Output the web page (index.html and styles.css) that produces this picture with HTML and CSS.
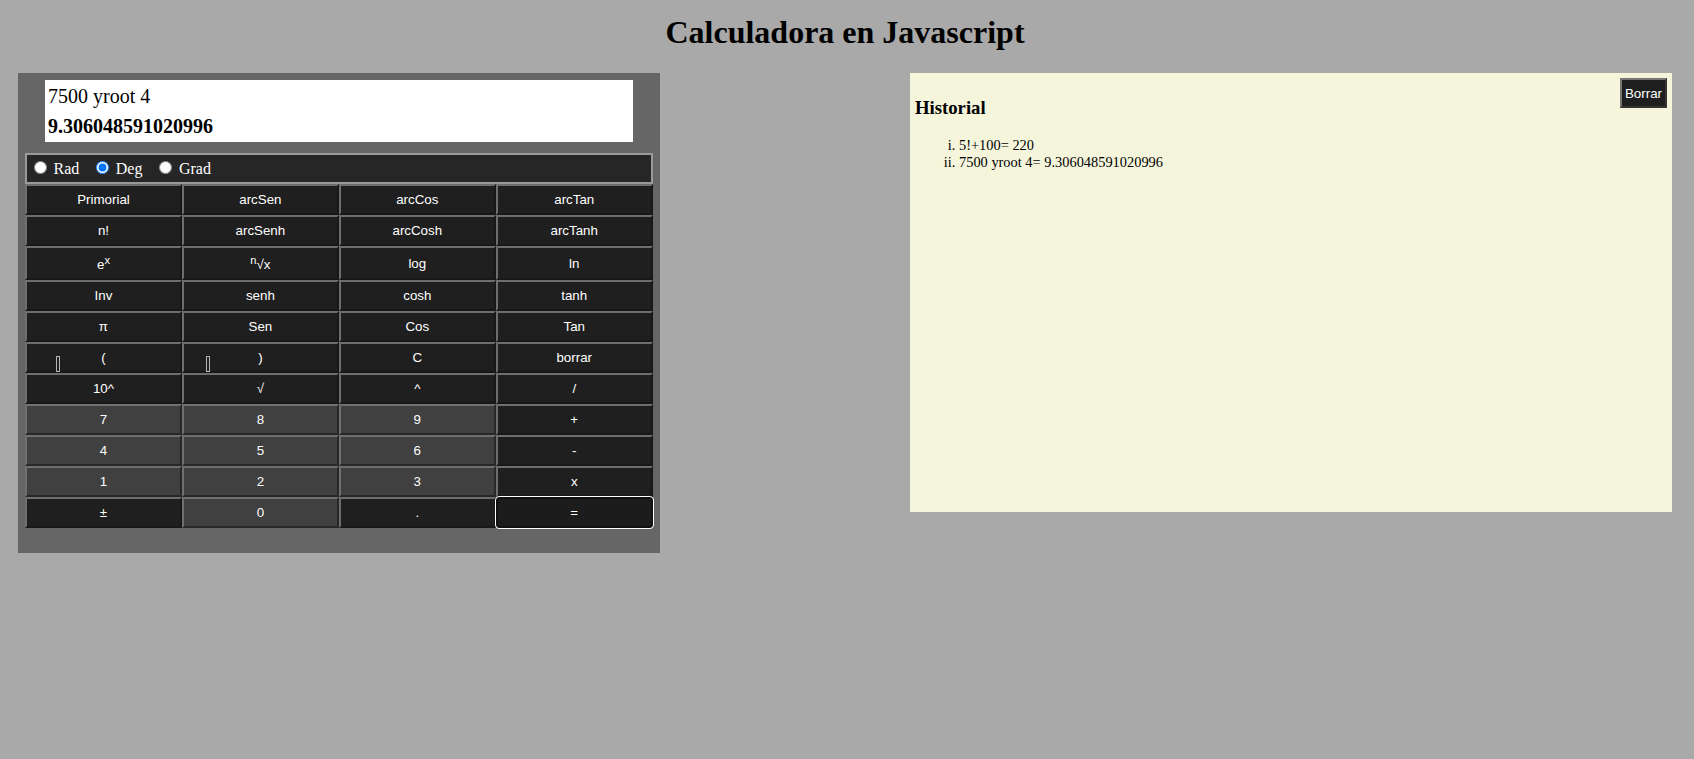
FILE: index.html
```html
<!DOCTYPE html>
<html lang="es">
<head>
<meta charset="utf-8">
<title>Calculadora en Javascript</title>
<link rel="stylesheet" href="styles.css">
</head>
<body>
<h1 class="title">Calculadora en Javascript</h1>
<div class="main">
  <div class="calc">
    <div class="display">
      <div class="expr">7500 yroot 4</div>
      <div class="result">9.306048591020996</div>
    </div>
    <div class="modes">
      <label class="mode"><input type="radio" name="mode"> Rad</label>
      <label class="mode"><input type="radio" name="mode" checked> Deg</label>
      <label class="mode"><input type="radio" name="mode"> Grad</label>
    </div>
    <div class="keys">
      <button class="key">Primorial</button>
      <button class="key">arcSen</button>
      <button class="key">arcCos</button>
      <button class="key">arcTan</button>

      <button class="key">n!</button>
      <button class="key">arcSenh</button>
      <button class="key">arcCosh</button>
      <button class="key">arcTanh</button>

      <button class="key">e<sup>x</sup></button>
      <button class="key"><sup>n</sup>√x</button>
      <button class="key">log</button>
      <button class="key">ln</button>

      <button class="key">Inv</button>
      <button class="key">senh</button>
      <button class="key">cosh</button>
      <button class="key">tanh</button>

      <button class="key">π</button>
      <button class="key">Sen</button>
      <button class="key">Cos</button>
      <button class="key">Tan</button>

      <button class="key"><span class="tofu tofu-a"></span>(</button>
      <button class="key"><span class="tofu tofu-b"></span>)</button>
      <button class="key">C</button>
      <button class="key">borrar</button>

      <button class="key">10^</button>
      <button class="key">√</button>
      <button class="key">^</button>
      <button class="key">/</button>

      <button class="key num">7</button>
      <button class="key num">8</button>
      <button class="key num">9</button>
      <button class="key">+</button>

      <button class="key num">4</button>
      <button class="key num">5</button>
      <button class="key num">6</button>
      <button class="key">-</button>

      <button class="key num">1</button>
      <button class="key num">2</button>
      <button class="key num">3</button>
      <button class="key">x</button>

      <button class="key">±</button>
      <button class="key num">0</button>
      <button class="key">.</button>
      <button class="key equals">=</button>
    </div>
  </div>
  <div class="history">
    <button class="clear">Borrar</button>
    <h3 class="history-title">Historial</h3>
    <ol class="history-list">
      <li>5!+100= 220</li>
      <li>7500 yroot 4= 9.306048591020996</li>
    </ol>
  </div>
</div>
</body>
</html>
```

FILE: styles.css
```css
html, body {
  background: #a9a9a9;
}

body {
  margin: 0;
  font-family: "Liberation Serif", "Times New Roman", serif;
  color: #000;
}

.title {
  margin: 13.5px 0 22.5px;
  padding-right: 4px;
  text-align: center;
  font-size: 32px;
  font-weight: bold;
}

.main {
  display: flex;
  justify-content: space-between;
  align-items: flex-start;
  padding: 0 22px 0 18px;
}

/* Calculator */
.calc {
  box-sizing: border-box;
  width: 642px;
  padding: 7px 7px 25px;
  background: #666;
}

.display {
  margin: 0 20px 10.5px;
  padding: 1px 3px;
  background: #fff;
  font-size: 20px;
}

.expr,
.result {
  height: 30px;
  line-height: 30px;
  white-space: nowrap;
}

.result {
  font-weight: bold;
}

.modes {
  box-sizing: border-box;
  height: 31.5px;
  padding: 3px 0 0 1.5px;
  border: 2px solid #9a9a9a;
  background: #262626;
  color: #fff;
  font-size: 16px;
  white-space: nowrap;
}

.mode {
  margin-right: 7.5px;
}

.mode input {
  margin: 3px 3px 0 5px;
}

.keys {
  display: grid;
  grid-template-columns: repeat(4, 1fr);
  margin-right: 0.3px;
}

.key {
  position: relative;
  box-sizing: border-box;
  margin: 0;
  padding: 6px 0;
  border: 2px solid;
  border-color: #6e6e6e #181818 #181818 #6e6e6e;
  background: #1f1f1f;
  color: #fff;
  font-family: "Liberation Sans", Arial, sans-serif;
  font-size: 13.333px;
  line-height: normal;
  text-align: center;
}

.key.num {
  background: #404040;
  border-color: #707070 #282828 #282828 #707070;
}

.key.equals {
  border: 2px solid #111;
  border-radius: 3px;
  outline: 1px solid #fff;
  outline-offset: 0;
  background: #1c1c1c;
}

.tofu {
  position: absolute;
  top: 12px;
  width: 2px;
  height: 14px;
  border: 1px solid #b4b4b4;
}

.tofu-a {
  left: 29px;
}

.tofu-b {
  left: 22px;
}

/* History panel */
.history {
  box-sizing: border-box;
  width: 762px;
  height: 439px;
  padding: 5px;
  background: #f5f5dc;
}

.clear {
  float: right;
  margin: 0;
  padding: 5.5px 3px;
  border: 2px solid;
  border-color: #767676 #333 #333 #767676;
  background: #1f1f1f;
  color: #fff;
  font-family: "Liberation Sans", Arial, sans-serif;
  font-size: 13.333px;
  line-height: normal;
}

.history-title {
  margin: 18.72px 0;
  font-size: 18.72px;
  font-weight: bold;
}

.history-list {
  margin: 14.4px 0;
  padding-left: 44px;
  list-style-type: lower-roman;
  font-size: 14.4px;
}
```
